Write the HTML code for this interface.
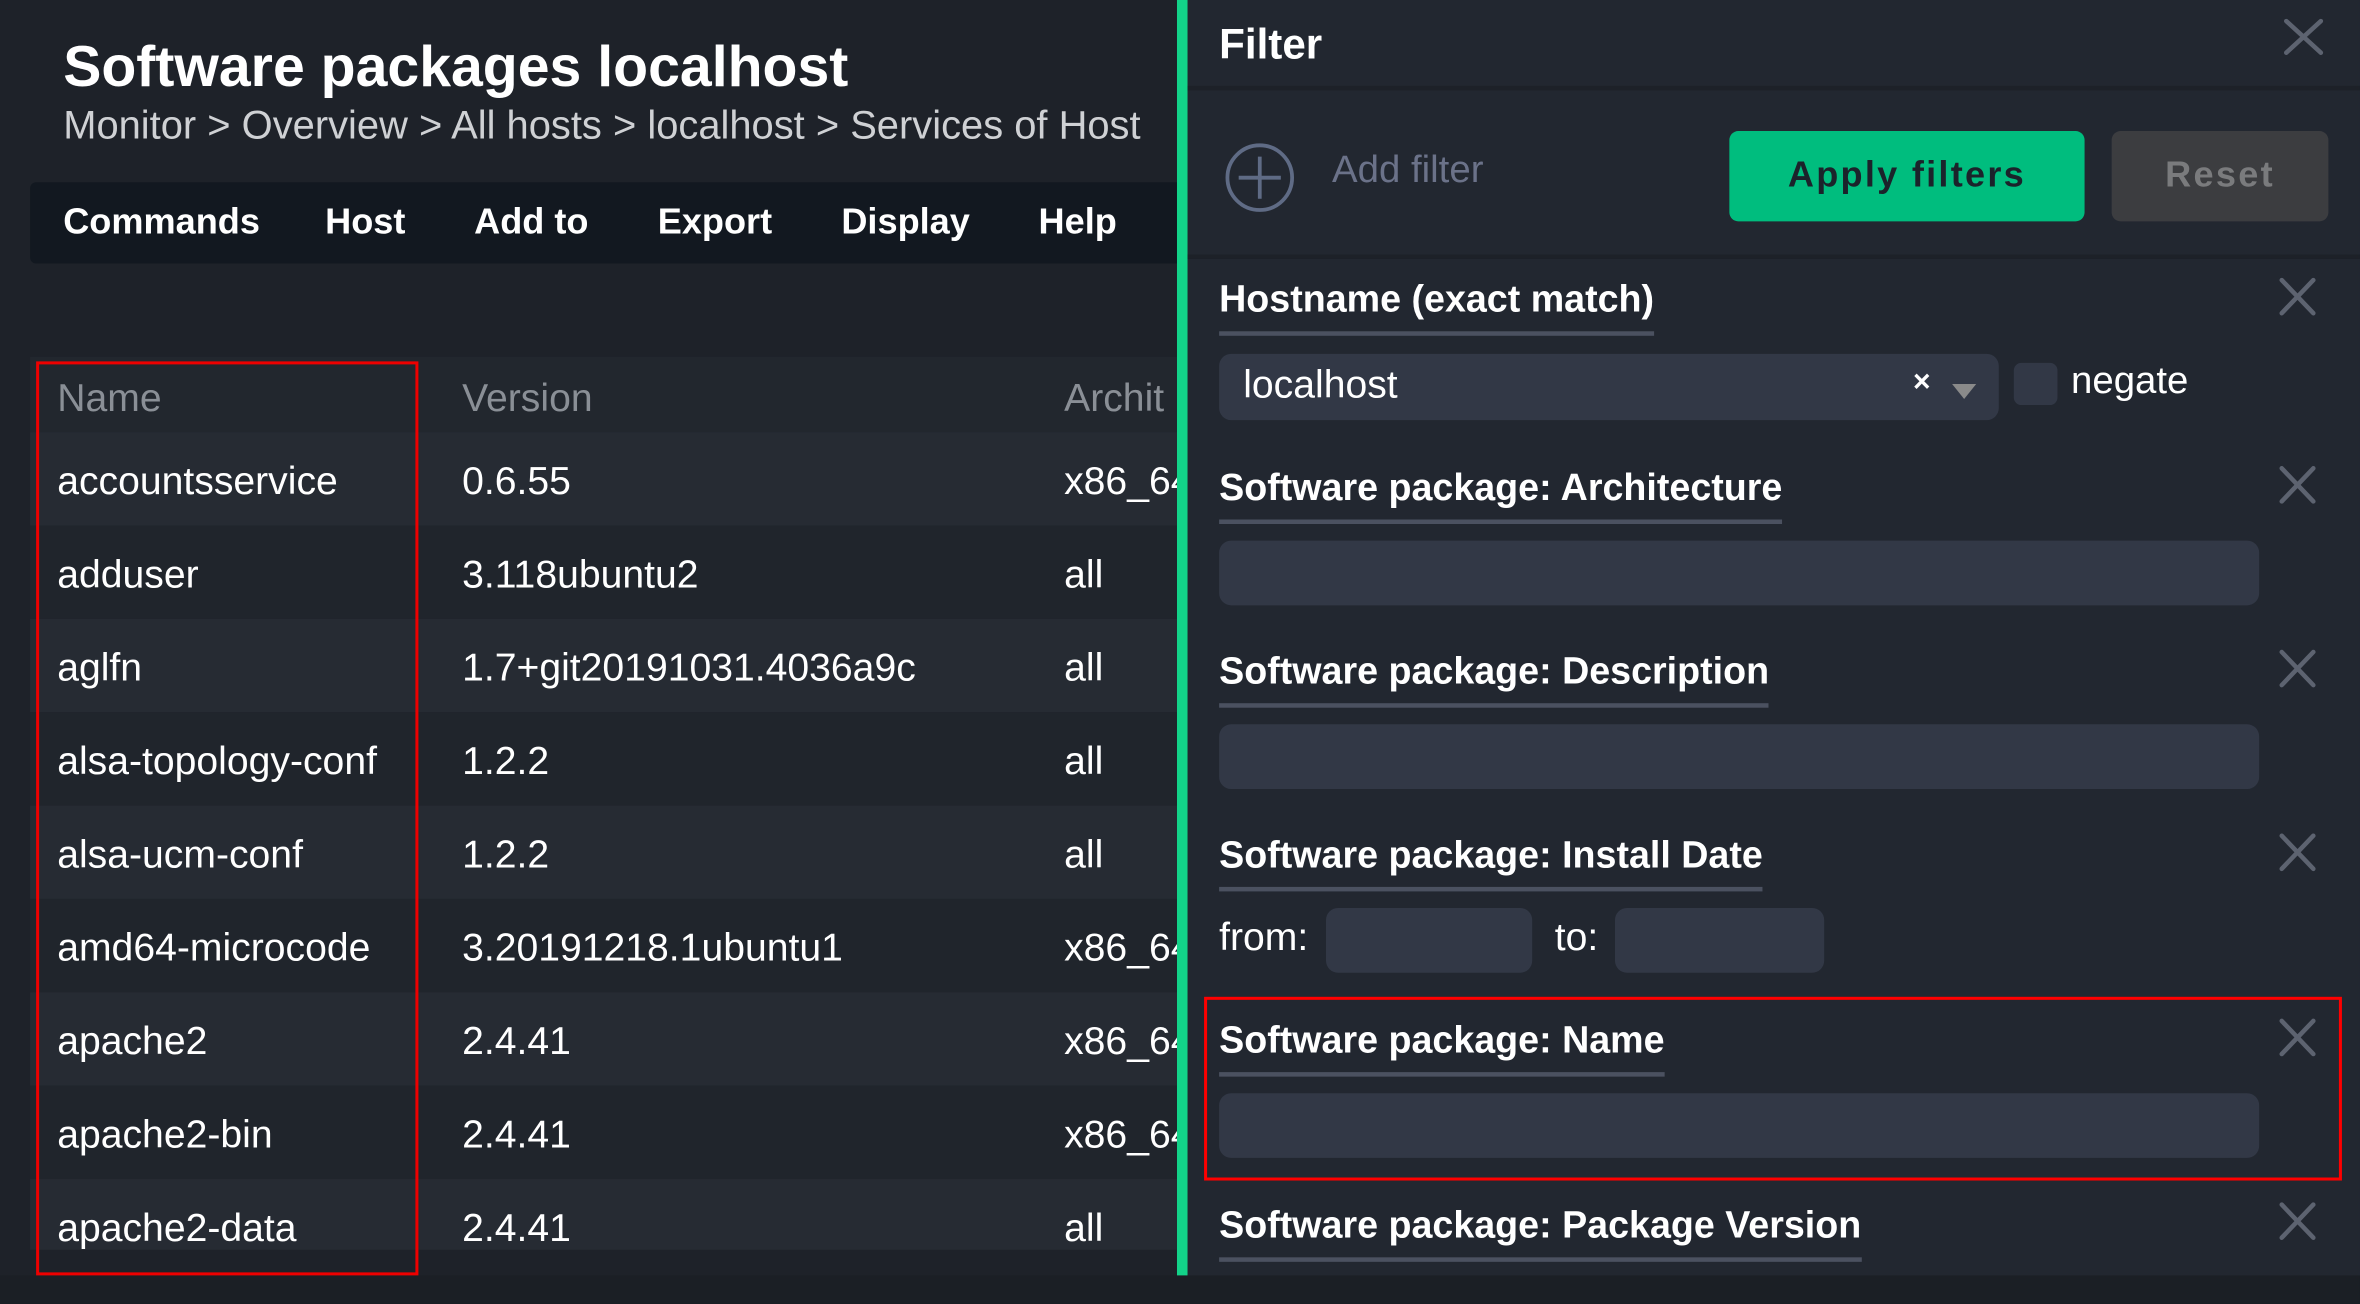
<!DOCTYPE html>
<html><head><meta charset="utf-8"><style>
html,body{margin:0;padding:0;background:#1e2229;overflow:hidden;width:2360px;height:1304px}
#s{position:absolute;left:0;top:0;width:1568px;height:866px;transform:scale(1.50510,1.50577);transform-origin:0 0;font-family:"Liberation Sans",sans-serif;color:#fff;background:#1e2229}
.a{position:absolute;white-space:nowrap}
.menu span{position:absolute;top:134px;font-size:24px;font-weight:bold}
.row{position:absolute;left:20px;width:762px;height:62px;overflow:hidden}
.row span{position:absolute;top:17px;font-size:26px}
.ft{position:absolute;left:810px;font-size:25px;font-weight:bold;padding-bottom:6px;border-bottom:3px solid #4b5160}
.in{position:absolute;background:#323846;border-radius:8px}
</style></head><body><div id="s">
<div class="a" style="left:42px;top:24px;font-size:38px;font-weight:bold">Software packages localhost</div>
<div class="a" style="left:42px;top:68px;font-size:26.5px;color:#cfd1d4">Monitor &gt; Overview &gt; All hosts &gt; localhost &gt; Services of Host</div>
<div class="a" style="left:20px;top:121px;width:765px;height:54px;background:#121820;border-radius:4px 0 0 4px"></div>
<div class="menu"><span style="left:42px">Commands</span><span style="left:216px">Host</span><span style="left:315px">Add to</span><span style="left:437px">Export</span><span style="left:559px">Display</span><span style="left:690px">Help</span></div>
<div class="row" style="top:237px;height:50px;background:#22272e"><span style="left:18px;top:12px;color:#8a8f96">Name</span><span style="left:287px;top:12px;color:#8a8f96">Version</span><span style="left:687px;top:12px;color:#8a8f96">Archit</span></div>
<div class="row" style="top:287px;background:#262b33"><span style="left:18px">accountsservice</span><span style="left:287px">0.6.55</span><span style="left:687px">x86_64</span></div>
<div class="row" style="top:349px;background:#20252c"><span style="left:18px">adduser</span><span style="left:287px">3.118ubuntu2</span><span style="left:687px">all</span></div>
<div class="row" style="top:411px;background:#262b33"><span style="left:18px">aglfn</span><span style="left:287px">1.7+git20191031.4036a9c</span><span style="left:687px">all</span></div>
<div class="row" style="top:473px;background:#20252c"><span style="left:18px">alsa-topology-conf</span><span style="left:287px">1.2.2</span><span style="left:687px">all</span></div>
<div class="row" style="top:535px;background:#262b33"><span style="left:18px">alsa-ucm-conf</span><span style="left:287px">1.2.2</span><span style="left:687px">all</span></div>
<div class="row" style="top:597px;background:#20252c"><span style="left:18px">amd64-microcode</span><span style="left:287px">3.20191218.1ubuntu1</span><span style="left:687px">x86_64</span></div>
<div class="row" style="top:659px;background:#262b33"><span style="left:18px">apache2</span><span style="left:287px">2.4.41</span><span style="left:687px">x86_64</span></div>
<div class="row" style="top:721px;background:#20252c"><span style="left:18px">apache2-bin</span><span style="left:287px">2.4.41</span><span style="left:687px">x86_64</span></div>
<div class="row" style="top:783px;height:47px;background:#262b33"><span style="left:18px">apache2-data</span><span style="left:287px">2.4.41</span><span style="left:687px">all</span></div>
<div class="a" style="left:0;top:847px;width:1568px;height:19px;background:#1b1f25"></div>
<div class="a" style="left:24px;top:240px;width:250px;height:603px;border:2px solid #e00"></div>
<!-- panel -->
<div class="a" style="left:782px;top:0;width:786px;height:847px;background:#222730"></div>
<div class="a" style="left:782px;top:0;width:7px;height:847px;background:#13d389"></div>
<div class="a" style="left:789px;top:57px;width:779px;height:3px;background:#1d2128"></div>
<div class="a" style="left:789px;top:169px;width:779px;height:3px;background:#1d2128"></div>
<div class="a" style="left:810px;top:14px;font-size:28px;font-weight:bold">Filter</div>
<div class="a" style="left:885px;top:99px;font-size:25.5px;color:#6b7289">Add filter</div>
<div class="a" style="left:1149px;top:87px;width:236px;height:60px;background:#00bd7e;border-radius:6px;color:#1b232b;font-weight:bold;font-size:24px;letter-spacing:1.5px;text-align:center;line-height:60px">Apply filters</div>
<div class="a" style="left:1403px;top:87px;width:144px;height:60px;background:#3c3d40;border-radius:6px;color:#7a7b7d;font-weight:bold;font-size:24px;letter-spacing:1.5px;text-align:center;line-height:60px">Reset</div>
<div class="ft" style="top:185px">Hostname (exact match)</div>
<div class="in" style="left:810px;top:235px;width:518px;height:44px"></div>
<div class="a" style="left:826px;top:240px;font-size:26px">localhost</div>
<div class="a" style="left:1271px;top:243px;font-size:20px;font-weight:bold">×</div>
<div class="in" style="left:1338px;top:241px;width:29px;height:28px;border-radius:5px"></div>
<div class="a" style="left:1376px;top:239px;font-size:25.5px">negate</div>
<div class="ft" style="top:310px">Software package: Architecture</div>
<div class="in" style="left:810px;top:359px;width:691px;height:43px"></div>
<div class="ft" style="top:432px">Software package: Description</div>
<div class="in" style="left:810px;top:481px;width:691px;height:43px"></div>
<div class="ft" style="top:554px">Software package: Install Date</div>
<div class="a" style="left:810px;top:607px;font-size:26px">from:</div>
<div class="in" style="left:881px;top:603px;width:137px;height:43px"></div>
<div class="a" style="left:1033px;top:607px;font-size:26px">to:</div>
<div class="in" style="left:1073px;top:603px;width:139px;height:43px"></div>
<div class="ft" style="top:677px">Software package: Name</div>
<div class="in" style="left:810px;top:726px;width:691px;height:43px"></div>
<div class="a" style="left:800px;top:662px;width:752px;height:118px;border:2px solid #f00"></div>
<div class="ft" style="top:800px">Software package: Package Version</div>
<svg class="a" style="left:0;top:0" width="1568" height="866">
<g stroke="#5d6370" stroke-width="3" stroke-linecap="round" fill="none">
<path d="M1519 14L1542 35M1542 14L1519 35"/>
<path d="M1516 186L1537 208M1537 186L1516 208"/>
<path d="M1516 311L1537 333M1537 311L1516 333"/>
<path d="M1516 433L1537 455M1537 433L1516 455"/>
<path d="M1516 555L1537 577M1537 555L1516 577"/>
<path d="M1516 678L1537 700M1537 678L1516 700"/>
<path d="M1516 800L1537 822M1537 800L1516 822"/>
</g>
<circle cx="837" cy="118" r="21.5" stroke="#5f6b85" stroke-width="2.5" fill="none"/>
<path d="M837 104V132M823 118H851" stroke="#5f6b85" stroke-width="2.5"/>
<path d="M1297 255L1313 255L1305 265Z" fill="#8a8a8a"/>
</svg>
</div></body></html>
